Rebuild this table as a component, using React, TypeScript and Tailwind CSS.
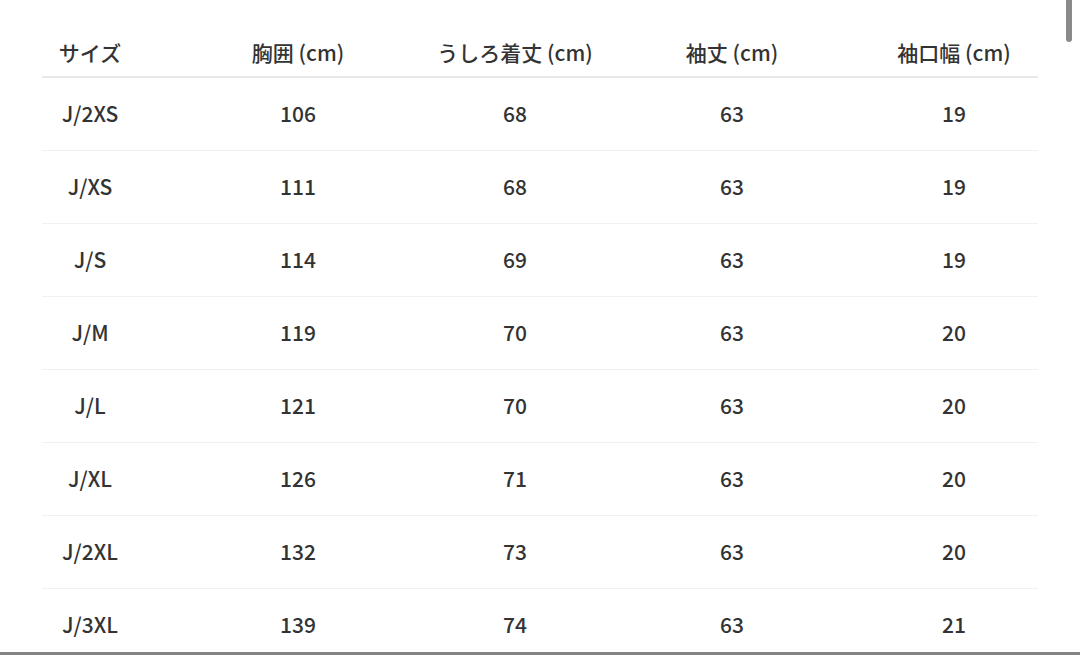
const headers = ["サイズ", "胸囲 (cm)", "うしろ着丈 (cm)", "袖丈 (cm)", "袖口幅 (cm)"];

const rows = [
  ["J/2XS", "106", "68", "63", "19"],
  ["J/XS", "111", "68", "63", "19"],
  ["J/S", "114", "69", "63", "19"],
  ["J/M", "119", "70", "63", "20"],
  ["J/L", "121", "70", "63", "20"],
  ["J/XL", "126", "71", "63", "20"],
  ["J/2XL", "132", "73", "63", "20"],
  ["J/3XL", "139", "74", "63", "21"],
];

const font = { fontFamily: '"Noto Sans CJK JP", "Noto Sans", sans-serif' };

export default function App() {
  return (
    <div className="relative w-[1080px] h-[655px] bg-white overflow-hidden text-[#333] font-medium" style={font}>
      <div className="pt-[26px] pl-[42px] pr-[42px]">
        <div className="grid grid-cols-[96px_320px_114px_320px_124px_1fr] h-[52px] items-start border-b-2 border-[#e8e8e8]">
          {headers.map((h) => (
            <div key={h} className="text-center text-[21px] leading-[52px] whitespace-nowrap flex justify-center">
              {h}
            </div>
          ))}
          <div />
        </div>
        {rows.map((r, i) => (
          <div
            key={r[0]}
            className={`grid grid-cols-[96px_320px_114px_320px_124px_1fr] h-[73px] items-center ${
              i < rows.length - 1 ? "border-b border-[#f1f1f1]" : ""
            }`}
          >
            {r.map((c, j) => (
              <div key={j} className="text-center text-[21px] -mt-[1px] whitespace-nowrap flex justify-center">
                {c}
              </div>
            ))}
            <div />
          </div>
        ))}
      </div>
      <div className="absolute right-[8px] top-0 w-[6px] h-[42px] rounded-b-full bg-[#8a8a8a]" />
      <div className="absolute left-0 bottom-0 w-full h-[3px] bg-[#858585]" />
    </div>
  );
}
